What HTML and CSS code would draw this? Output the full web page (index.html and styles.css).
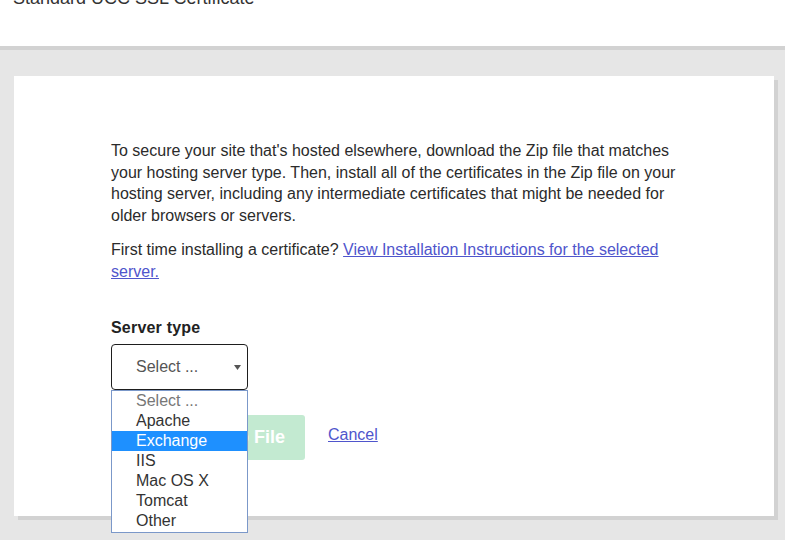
FILE: index.html
```html
<!DOCTYPE html>
<html lang="en">
<head>
<meta charset="utf-8">
<title>Standard UCC SSL Certificate</title>
<link rel="stylesheet" href="styles.css">
</head>
<body>
<header class="page-header">
  <h1 class="page-title">Standard UCC SSL Certificate</h1>
</header>
<main class="page-main">
  <section class="card">
    <p class="intro">To secure your site that's hosted elsewhere, download the Zip file that matches your hosting server type. Then, install all of the certificates in the Zip file on your hosting server, including any intermediate certificates that might be needed for older browsers or servers.</p>
    <p class="intro">First time installing a certificate? <a class="link" href="#">View Installation Instructions for the selected server.</a></p>

    <div class="field">
      <label class="field-label">Server type</label>
      <div class="select-wrap">
        <div class="select-box">
          <span class="select-value">Select ...</span>
          <svg class="select-arrow" width="7" height="5" viewBox="0 0 7 5"><path d="M0 0h7L3.5 5z" fill="#555"/></svg>
        </div>
        <ul class="select-list">
          <li class="option option-placeholder">Select ...</li>
          <li class="option">Apache</li>
          <li class="option option-active">Exchange</li>
          <li class="option">IIS</li>
          <li class="option">Mac OS X</li>
          <li class="option">Tomcat</li>
          <li class="option">Other</li>
        </ul>
      </div>
    </div>

    <div class="actions">
      <button class="btn-download" type="button">Download Zip File</button>
      <a class="link cancel" href="#">Cancel</a>
    </div>
  </section>
</main>
</body>
</html>
```

FILE: styles.css
```css
html {
  background: #e6e6e6;
}
body {
  margin: 0;
  font-family: "Liberation Sans", Arial, sans-serif;
  color: #2b2b2b;
  min-height: 540px;
}
.page-header {
  display: flex;
  align-items: flex-start;
  height: 46px;
  background: #fff;
  border-bottom: 4px solid #d2d2d2;
  padding-left: 13px;
}
.page-title {
  margin: -12px 0 0;
  font-size: 18px;
  line-height: 20px;
  font-weight: normal;
  color: #333;
}
.page-main {
  padding: 26px 11px 0 14px;
}
.card {
  background: #fff;
  box-shadow: 4px 4px 0 #d2d2d2;
  padding: 64px 20px 56px 97px;
}
.intro {
  margin: 0 0 13px;
  max-width: 580px;
  font-size: 16px;
  line-height: 21.6px;
}
.link {
  color: #4f55cc;
  text-decoration: underline;
}
.field {
  margin-top: 35px;
  display: flex;
  flex-direction: column;
  align-items: flex-start;
}
.field-label {
  font-size: 16px;
  line-height: 20px;
  font-weight: bold;
  color: #222;
  letter-spacing: 0.2px;
}
.select-wrap {
  position: relative;
  margin-top: 6px;
  width: 137px;
}
.select-box {
  box-sizing: border-box;
  height: 46px;
  border: 1px solid #1e1e1e;
  border-radius: 4px;
  display: flex;
  align-items: center;
  justify-content: space-between;
  padding: 0 6px 0 24px;
}
.select-value {
  font-size: 16px;
  color: #555;
}
.select-arrow {
  display: block;
  margin-top: 1px;
}
.select-list {
  position: absolute;
  top: 100%;
  left: 0;
  z-index: 2;
  box-sizing: border-box;
  width: 137px;
  margin: 0;
  padding: 0 0 1px;
  list-style: none;
  background: #fff;
  border: 1px solid #7b98c9;
}
.option {
  height: 20px;
  line-height: 20px;
  font-size: 16px;
  padding-left: 24px;
  color: #333;
}
.option-placeholder {
  color: #777;
}
.option-active {
  background: #1e90ff;
  color: #fff;
}
.actions {
  margin-top: 25px;
  display: flex;
  align-items: center;
  gap: 23px;
}
.btn-download {
  height: 45px;
  padding: 0 20px;
  border: none;
  border-radius: 3px;
  background: #c3ead1;
  color: #fff;
  font-family: "Liberation Sans", Arial, sans-serif;
  font-size: 18px;
  font-weight: bold;
}
.cancel {
  font-size: 16px;
  margin-bottom: 4px;
}
```
